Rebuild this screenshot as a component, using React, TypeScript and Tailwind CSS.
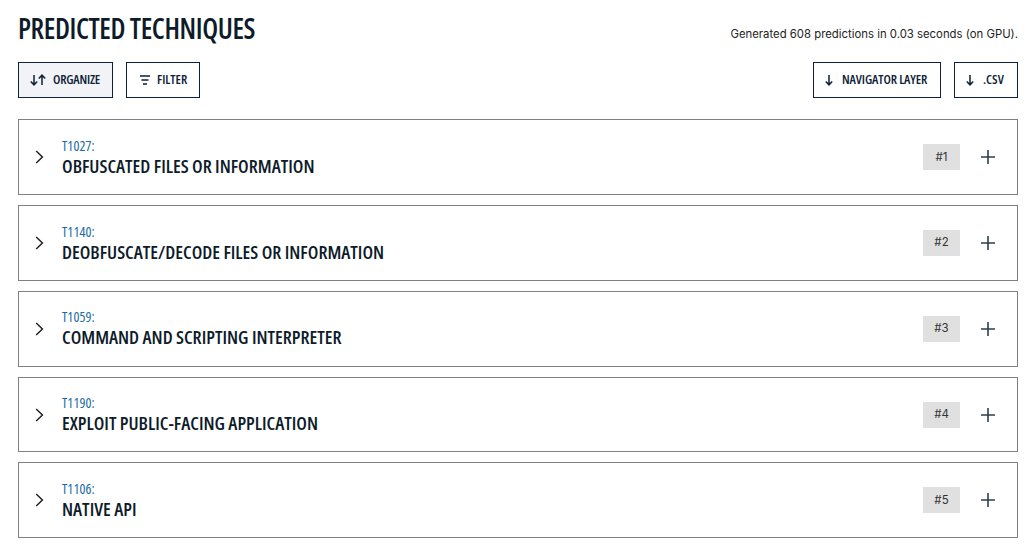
const techniques = [
  { id: 'T1027', name: 'OBFUSCATED FILES OR INFORMATION', rank: 1 },
  { id: 'T1140', name: 'DEOBFUSCATE/DECODE FILES OR INFORMATION', rank: 2 },
  { id: 'T1059', name: 'COMMAND AND SCRIPTING INTERPRETER', rank: 3 },
  { id: 'T1190', name: 'EXPLOIT PUBLIC-FACING APPLICATION', rank: 4 },
  { id: 'T1106', name: 'NATIVE API', rank: 5 },
];

const condensed = "font-['Open_Sans',sans-serif] [font-stretch:75%]";

function DownArrow() {
  return (
    <svg width="8" height="12" viewBox="0 0 8 12" fill="none" stroke="#0d2137" strokeWidth="1.5" className="shrink-0">
      <path d="M4 1v9.500M.8 7.500 4 10.800l3.200-3.300" />
    </svg>
  );
}

function UpArrow() {
  return (
    <svg width="8" height="12" viewBox="0 0 8 12" fill="none" stroke="#0d2137" strokeWidth="1.5" className="shrink-0">
      <path d="M4 11V1.500M.8 4.500 4 1.200l3.200 3.300" />
    </svg>
  );
}

function FilterIcon() {
  return (
    <svg width="12" height="12" viewBox="0 0 12 12" fill="none" stroke="#0d2137" strokeWidth="1.3">
      <path d="M1 2h10M2.500 6h7M4 10h4" />
    </svg>
  );
}

function Chevron() {
  return (
    <svg width="12" height="16" viewBox="0 0 12 16" fill="none" stroke="#222" strokeWidth="1.5" className="shrink-0">
      <path d="M3.200 2 9.400 8l-6.200 6" />
    </svg>
  );
}

function PlusIcon() {
  return (
    <svg width="16" height="16" viewBox="0 0 16 16" fill="none" stroke="#2c3e50" strokeWidth="1.6" className="ml-[20px] shrink-0">
      <path d="M1 8h14M8 1v14" />
    </svg>
  );
}

function Button({ children, className = '' }: { children: React.ReactNode; className?: string }) {
  return (
    <button
      className={`h-9 flex items-center whitespace-nowrap border border-[#0d2137] text-[#0d2137] text-[13px] font-semibold ${condensed} ${className}`}
    >
      {children}
    </button>
  );
}

export default function App() {
  return (
    <div className="w-[1034px] h-[545px] overflow-hidden bg-white pl-[18px] pr-[16px] font-['Inter',sans-serif]">
      <div className="flex items-start justify-between h-[62px]">
        <h1 className={`mt-[8px] text-[28px] leading-[40px] tracking-[-0.4px] font-semibold text-[#0d1b2a] ${condensed}`}>
          PREDICTED TECHNIQUES
        </h1>
        <p className="mt-[27px] text-[11.35px] leading-[15px] text-[#222]">
          Generated 608 predictions in 0.03 seconds (on GPU).
        </p>
      </div>

      <div className="flex justify-between h-[57.4px]">
        <div className="flex gap-[13px]">
          <Button className="w-[95px] pl-[11px] bg-[#f1f3f6]">
            <DownArrow />
            <UpArrow />
            <span className="ml-[7px] tracking-[-0.2px]">ORGANIZE</span>
          </Button>
          <Button className="w-[74px] pl-[12px]">
            <FilterIcon />
            <span className="ml-[6px]">FILTER</span>
          </Button>
        </div>
        <div className="flex gap-[13px]">
          <Button className="w-[128px] pl-[11px]">
            <DownArrow />
            <span className="ml-[9px] tracking-[-0.1px]">NAVIGATOR LAYER</span>
          </Button>
          <Button className="w-[64px] pl-[11px]">
            <DownArrow />
            <span className="ml-[9px]">.CSV</span>
          </Button>
        </div>
      </div>

      <div className="flex flex-col gap-[10px]">
        {techniques.map((t) => (
          <div key={t.id} className="h-[75.75px] flex items-center border border-[#808080] pl-[14px] pr-[21px]">
            <Chevron />
            <div className="ml-[17px] flex-1">
              <div className={`text-[14px] leading-[17px] tracking-[0.1px] text-[#1a6aa5] ${condensed}`}>{t.id}:</div>
              <div className={`text-[18.7px] leading-[24px] font-semibold text-[#0d1b2a] ${condensed}`}>{t.name}</div>
            </div>
            <span className="w-[37px] h-[26px] flex items-center justify-center bg-[#e0e0e0] text-[11.5px] text-[#333]">
              #{t.rank}
            </span>
            <PlusIcon />
          </div>
        ))}
      </div>
    </div>
  );
}
